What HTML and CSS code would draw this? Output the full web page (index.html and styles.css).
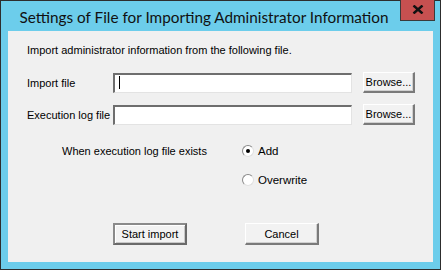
FILE: index.html
```html
<!DOCTYPE html>
<html>
<head>
<meta charset="utf-8">
<link rel="stylesheet" href="styles.css">
</head>
<body>
<div class="window">
  <div class="titlebar">
    <div class="title">Settings of File for Importing Administrator Information</div>
    <div class="close">
      <svg width="12" height="9" viewBox="0 0 12 9"><path d="M1.5 0.5 L10.5 8.5 M10.5 0.5 L1.5 8.5" stroke="#111" stroke-width="2.4" fill="none"/></svg>
    </div>
  </div>
  <div class="client">
    <p class="intro">Import administrator information from the following file.</p>
    <div class="form">
      <span class="label">Import file</span>
      <div class="field"><span class="caret"></span></div>
      <button class="btn browse">Browse...</button>
      <span class="label">Execution log file</span>
      <div class="field"></div>
      <button class="btn browse">Browse...</button>
    </div>
    <div class="exists">
      <span class="exists-label">When execution log file exists</span>
      <div class="radios">
        <label class="radio"><span class="dot checked"></span>Add</label>
        <label class="radio"><span class="dot"></span>Overwrite</label>
      </div>
    </div>
    <div class="actions">
      <button class="btn action default">Start import</button>
      <button class="btn action">Cancel</button>
    </div>
  </div>
</div>
</body>
</html>
```
FILE: styles.css
```css
* { box-sizing: border-box; }
html, body { margin: 0; padding: 0; background: #fff; }
body { font-family: "Liberation Sans", Arial, sans-serif; font-size: 11px; color: #000; }

.window {
  width: 441px;
  height: 270px;
  border: 1px solid #2d2d2d;
  background: #6ccdeb;
  padding: 0 7px 7px 7px;
  display: flex;
  flex-direction: column;
}

.titlebar {
  height: 30px;
  display: flex;
  align-items: flex-start;
}
.title {
  flex: 1;
  text-align: center;
  font-family: Lato, "Open Sans", sans-serif;
  font-size: 15.3px;
  line-height: 20px;
  padding-top: 6px;
  color: #111;
  white-space: nowrap;
}
.close {
  width: 35px;
  height: 21px;
  margin-top: -1px;
  margin-right: -2px;
  background: #c75050;
  border: 1px solid #3a3a3a;
  border-top: none;
  display: flex;
  align-items: center;
  justify-content: center;
  padding-bottom: 1px;
}

.client {
  flex: 1;
  background: #f0f0f0;
  padding: 12px 0 0 19px;
  display: flex;
  flex-direction: column;
}

.intro { margin: 0; line-height: 14px; }

.form {
  margin-top: 15px;
  display: grid;
  grid-template-columns: 75px 239px 52px;
  column-gap: 11px;
  row-gap: 11px;
  align-items: center;
}
.label { line-height: 14px; padding-top: 1px; white-space: nowrap; }

.field {
  height: 20px;
  background: #fff;
  border-top: 2px solid #6e6e6e;
  border-left: 2px solid #6e6e6e;
  border-right: 1px solid #e3e3e3;
  border-bottom: 1px solid #e3e3e3;
  padding: 1px 0 0 4px;
}
.caret { display: block; width: 1px; height: 13px; background: #000; }

.btn {
  font-family: "Liberation Sans", Arial, sans-serif;
  font-size: 11px;
  color: #000;
  background: #f2f2f2;
  border-top: 1px solid #fff;
  border-left: 1px solid #fff;
  border-right: 2px solid #7a7a7a;
  border-bottom: 2px solid #7a7a7a;
  padding: 0;
  height: 21px;
  box-shadow: inset -1px -1px 0 #d0d0d0;
}
.browse { width: 52px; }

.exists {
  margin-top: 19px;
  margin-left: 35px;
  display: flex;
}
.exists-label { width: 180px; line-height: 14px; }
.radios {
  display: flex;
  flex-direction: column;
  gap: 15px;
}
.radio {
  display: flex;
  align-items: center;
  gap: 4px;
  line-height: 14px;
  font-size: 11.5px;
}
.dot {
  width: 12px;
  height: 12px;
  border-radius: 50%;
  background: #fff;
  border: 1px solid #8a8a8a;
  border-right-color: #e0e0e0;
  border-bottom-color: #e0e0e0;
  display: flex;
  align-items: center;
  justify-content: center;
}
.dot.checked::after {
  content: "";
  width: 4px;
  height: 4px;
  border-radius: 50%;
  background: #000;
}

.actions {
  margin-top: 36px;
  margin-left: 86px;
  display: flex;
  gap: 58px;
}
.action { width: 74px; height: 22px; }
.action.default {
  border: 2px solid #6a6a6a;
  border-top-color: #8a8a8a;
  border-left-color: #8a8a8a;
  box-shadow: inset 1px 1px 0 #fff, inset -1px -1px 0 #c8c8c8;
}
```
